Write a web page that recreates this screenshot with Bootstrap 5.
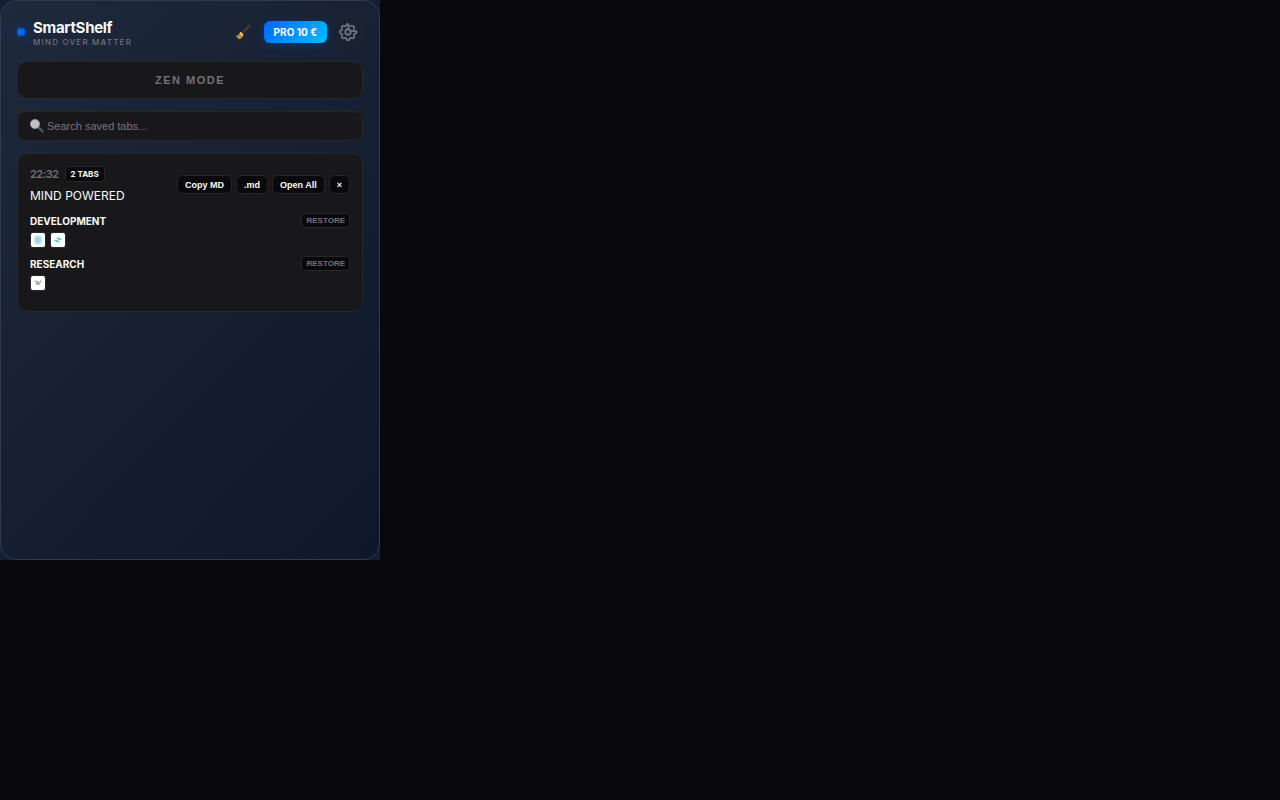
<!DOCTYPE html>
<html lang="en">
<head>
<meta charset="utf-8">
<meta name="viewport" content="width=device-width, initial-scale=1">
<title>SmartShelf</title>
<link href="https://cdn.jsdelivr.net/npm/bootstrap@5.3.0/dist/css/bootstrap.min.css" rel="stylesheet">
<style>
  :root { --ink: #09090b; --surface: #18181b; --line: #27272a; --muted: #71717a; }
  body { background: #09090b; color: #fafafa; font-family: Inter, sans-serif; font-size: 12px; line-height: 16px; }
  .popup { max-width: 380px; background: #141e33; }
  .shelf { min-height: 560px; border: 1px solid #2f3a4e; border-radius: 16px; background: linear-gradient(135deg, #1e293b 0%, #0f172a 100%); }
  .stack { gap: 12px; margin-top: 14px; }
  .tools, .meta { gap: 6px; }
  .dot { width: 8px; height: 8px; background: #0066ff; box-shadow: 0 0 12px rgba(0, 102, 255, .6); }
  .brand { padding-top: 2px; }
  .brand-name { font-size: 15px; line-height: 18px; font-weight: 700; letter-spacing: -.3px; }
  .tagline { font-size: 8px; line-height: 10px; font-weight: 500; letter-spacing: 1.2px; color: var(--muted); }
  .btn-tool { width: 30px; height: 30px; border: 1px solid #22242c; border-radius: 8px; color: var(--muted); }
  .btn-pro { height: 22px; padding: 0 10px; border-radius: 6px; font-size: 10px; line-height: 22px; font-weight: 700; color: #fff; background: linear-gradient(135deg, #0066ff, #00bfff); box-shadow: 0 2px 8px rgba(0, 102, 255, .3); }
  .panel { background: var(--surface); border: 1px solid var(--line); border-radius: 10px; }
  .btn-zen { height: 38px; font: 700 11px/16px "Liberation Sans", sans-serif; letter-spacing: 1.5px; color: var(--muted); }
  .search { height: 30px; border-radius: 8px; padding: 0 12px; gap: 3px; }
  .search input { font: 11px/16px "Liberation Sans", sans-serif; color: #fafafa; background: transparent; outline: 0; }
  .search input::placeholder { color: #75757a; opacity: 1; }
  .session { padding: 12px 12px 20px; }
  .time { font-size: 11px; font-weight: 600; letter-spacing: -.5px; color: var(--muted); }
  .tab-count { font-size: 8px; line-height: 14px; font-weight: 700; padding: 0 5px; border: 1px solid var(--line); border-radius: 4px; background: var(--ink); }
  .session-title { margin: 5px 0 0; font-size: 12px; line-height: 18px; font-weight: 400; }
  .btn-mini { height: 19px; padding: 0 7px; font: 700 9px/16px "Liberation Sans", sans-serif; color: #fafafa; background: var(--ink); border: 1px solid var(--line); border-radius: 6px; }
  .actions { padding-bottom: 2px; }
  .tab-group { margin-top: 8px; }
  .group-name { font-size: 10px; line-height: 16px; font-weight: 700; }
  .btn-restore { height: 15px; padding: 0 4px; font: 700 8px/12px "Liberation Sans", sans-serif; color: var(--muted); background: var(--ink); border: 1px solid var(--line); border-radius: 4px; }
  .icons { margin-top: 3px; }
  .favicon { width: 16px; height: 16px; background: #fff; border: 1px solid var(--line); border-radius: 3px; }
</style>
</head>
<body>
<main class="popup">
  <div class="shelf p-3">
    <header class="d-flex justify-content-between align-items-center">
      <div class="d-flex align-items-center gap-2">
        <span class="dot rounded-circle"></span>
        <div class="brand">
          <h1 class="brand-name m-0">SmartShelf</h1>
          <p class="tagline m-0">MIND OVER MATTER</p>
        </div>
      </div>
      <div class="tools d-flex align-items-center">
        <button type="button" class="btn btn-tool p-0 d-flex align-items-center justify-content-center" aria-label="Clean up">
          <svg width="16" height="16" viewBox="0 0 16 16" aria-hidden="true">
            <path d="M14.800 1.500L7.500 8.800" stroke="#6b4429" stroke-width="1.200" stroke-linecap="round"/>
            <path d="M5.500 8L8.400 10.900Q7.600 14.200 4.300 15.300L.8 12.200Q3.800 11.400 5.500 8Z" fill="#d6a94b"/>
            <path d="M2 12.400L5 10.900M3.800 14L6.500 11M5 15L7.400 12.200" stroke="#7e5724" stroke-width=".7"/>
            <path d="M5.200 8.400L8 11.200" stroke="#f6dc8b" stroke-width="1.400"/>
          </svg>
        </button>
        <button type="button" class="btn btn-pro border-0">PRO 10 €</button>
        <button type="button" class="btn btn-tool p-0 d-flex align-items-center justify-content-center" aria-label="Settings">
          <svg width="22" height="22" viewBox="0 0 24 24" fill="none" stroke="currentColor" stroke-width="2" stroke-linejoin="round" stroke-linecap="round" aria-hidden="true">
            <path d="M12.500 9V5.500C12.300 2.600 10.700 2.600 10.300 4.300a1.720 1.720 0 0 1-2.570 1.070c-1.540-.94-3.310.83-2.370 2.370a1.720 1.720 0 0 1-1.070 2.570c-1.750.43-1.750 2.930 0 3.350a1.720 1.720 0 0 1 1.070 2.570c-.94 1.540.83 3.310 2.370 2.370a1.720 1.720 0 0 1 2.570 1.070c.43 1.750 2.930 1.750 3.350 0a1.720 1.720 0 0 1 2.570-1.070c1.540.94 3.310-.83 2.370-2.370a1.720 1.720 0 0 1 1.070-2.570Q21.600 13.400 21.300 11H14.500"/>
            <path d="M12.500 5.500L14.500 5.300L16.300 5.400Q18.800 4.600 18.600 7.700L18.300 9"/>
            <circle cx="12" cy="12" r="3"/>
          </svg>
        </button>
      </div>
    </header>

    <div class="stack d-flex flex-column">
      <button type="button" class="btn panel btn-zen w-100 p-0">ZEN MODE</button>

      <label class="panel search d-flex align-items-center">
        <svg width="14" height="14" viewBox="0 0 14 14" aria-hidden="true">
          <path d="M8.800 8.800L12.600 12.600" stroke="#3f4a50" stroke-width="2.600" stroke-linecap="round"/>
          <path d="M8.500 8L12.200 11.600" stroke="#87929a" stroke-width=".8"/>
          <circle cx="5" cy="5" r="4.600" fill="#c2c2c4" stroke="#96999c" stroke-width=".8"/>
        </svg>
        <input type="search" class="border-0 p-0 flex-grow-1" placeholder="Search saved tabs..." aria-label="Search saved tabs">
      </label>

      <section class="panel session">
        <div class="d-flex justify-content-between align-items-center">
          <div>
            <div class="meta d-flex align-items-center">
              <time class="time">22:32</time><span class="tab-count">2 TABS</span>
            </div>
            <h2 class="session-title">MIND POWERED</h2>
          </div>
          <div class="actions d-flex gap-1">
            <button type="button" class="btn btn-mini">Copy MD</button>
            <button type="button" class="btn btn-mini">.md</button>
            <button type="button" class="btn btn-mini">Open All</button>
            <button type="button" class="btn btn-mini" aria-label="Delete session">×</button>
          </div>
        </div>
        <div class="tab-group">
          <div class="d-flex justify-content-between"><h3 class="group-name m-0">DEVELOPMENT</h3><button type="button" class="btn btn-restore">RESTORE</button></div>
          <div class="icons d-flex gap-1">
            <span class="favicon d-flex align-items-center justify-content-center">
              <svg width="10" height="10" viewBox="0 0 10 10" fill="none" stroke="#9bd9e4" stroke-width=".9" aria-hidden="true"><circle cx="5" cy="5" r="3.400" fill="#c8ecf2" stroke="none"/><ellipse cx="5" cy="5" rx="4.500" ry="1.800"/><ellipse cx="5" cy="5" rx="4.500" ry="1.800" transform="rotate(60 5 5)"/><ellipse cx="5" cy="5" rx="4.500" ry="1.800" transform="rotate(120 5 5)"/><circle cx="5" cy="5" r=".9" fill="#6cc5d8" stroke="none"/></svg>
            </span>
            <span class="favicon d-flex align-items-center justify-content-center">
              <svg width="8" height="8" viewBox="0 0 24 24" fill="#38bdf8" aria-hidden="true"><path d="M12 4.800c-3.200 0-5.200 1.600-6 4.800 1.200-1.600 2.600-2.200 4.200-1.800.9.200 1.600.9 2.300 1.700C13.700 10.700 15.100 12 18 12c3.200 0 5.200-1.600 6-4.800-1.200 1.600-2.600 2.200-4.200 1.800-.9-.2-1.600-.9-2.300-1.700C16.300 6.100 14.900 4.800 12 4.800zM6 12c-3.200 0-5.200 1.600-6 4.800 1.200-1.600 2.600-2.200 4.200-1.800.9.200 1.600.9 2.300 1.700 1.200 1.200 2.600 2.500 5.500 2.500 3.200 0 5.200-1.600 6-4.800-1.200 1.600-2.600 2.200-4.200 1.800-.9-.2-1.600-.9-2.300-1.700C10.300 13.300 8.900 12 6 12z"/></svg>
            </span>
          </div>
        </div>
        <div class="tab-group">
          <div class="d-flex justify-content-between"><h3 class="group-name m-0">RESEARCH</h3><button type="button" class="btn btn-restore">RESTORE</button></div>
          <div class="icons d-flex gap-1">
            <span class="favicon d-flex align-items-center justify-content-center">
              <svg width="8" height="8" viewBox="0 0 8 8" fill="none" stroke="#777" stroke-width=".7" aria-hidden="true"><path d="M1.200 2L3 5.800L4.800 2M3.200 2L5 5.800L6.800 2M.6 2H1.800M2.800 2H3.800M6.200 2H7.400"/></svg>
            </span>
          </div>
        </div>
      </section>
    </div>
  </div>
</main>
<script src="https://cdn.jsdelivr.net/npm/bootstrap@5.3.0/dist/js/bootstrap.bundle.min.js"></script>
</body>
</html>
